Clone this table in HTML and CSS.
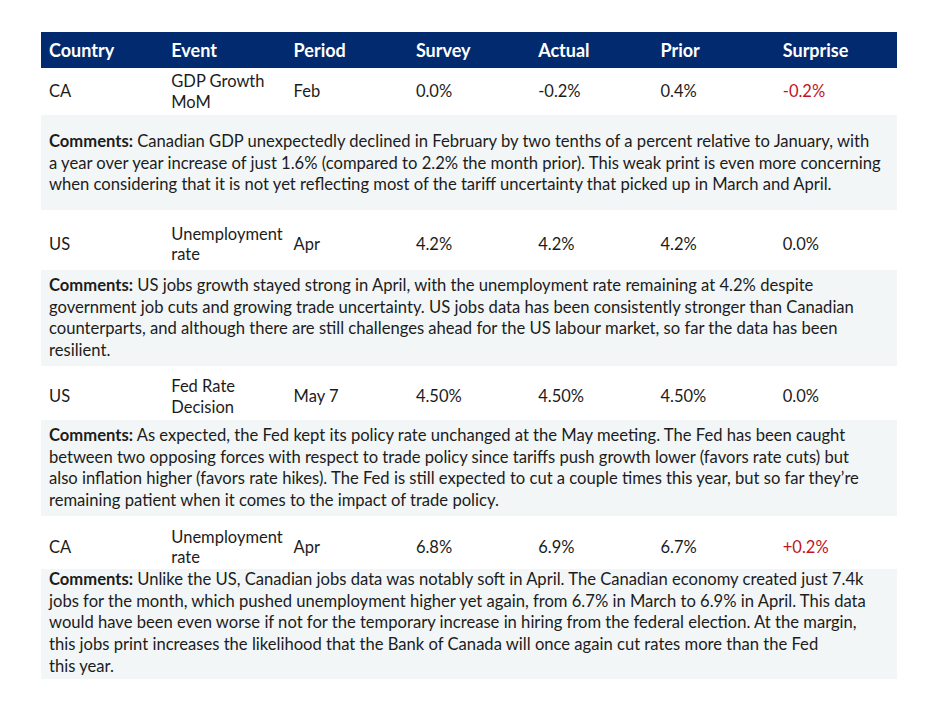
FILE: index.html
```html
<!DOCTYPE html>
<html lang="en">
<head>
<meta charset="utf-8">
<link rel="stylesheet" href="styles.css">
<title>Economic calendar</title>
</head>
<body>
<table class="cal">
  <colgroup>
    <col class="c"><col class="c"><col class="c"><col class="c"><col class="c"><col class="c"><col class="c">
  </colgroup>
  <thead>
    <tr class="head">
      <th>Country</th><th>Event</th><th>Period</th><th>Survey</th><th>Actual</th><th>Prior</th><th>Surprise</th>
    </tr>
  </thead>
  <tbody>
    <tr class="data r1">
      <td>CA</td><td class="ev">GDP Growth<br>MoM</td><td>Feb</td><td>0.0%</td><td>-0.2%</td><td>0.4%</td><td class="neg">-0.2%</td>
    </tr>
    <tr class="note n1">
      <td colspan="7"><b>Comments:</b> Canadian GDP unexpectedly declined in February by two tenths of a percent relative to January, with<br>a year over year increase of just 1.6% (compared to 2.2% the month prior). This weak print is even more concerning<br>when considering that it is not yet reflecting most of the tariff uncertainty that picked up in March and April.</td>
    </tr>
    <tr class="data r2">
      <td>US</td><td class="ev">Unemployment<br>rate</td><td>Apr</td><td>4.2%</td><td>4.2%</td><td>4.2%</td><td>0.0%</td>
    </tr>
    <tr class="note n2">
      <td colspan="7"><b>Comments:</b> US jobs growth stayed strong in April, with the unemployment rate remaining at 4.2% despite<br>government job cuts and growing trade uncertainty. US jobs data has been consistently stronger than Canadian<br>counterparts, and although there are still challenges ahead for the US labour market, so far the data has been<br>resilient.</td>
    </tr>
    <tr class="data r3">
      <td>US</td><td class="ev">Fed Rate<br>Decision</td><td>May 7</td><td>4.50%</td><td>4.50%</td><td>4.50%</td><td>0.0%</td>
    </tr>
    <tr class="note n3">
      <td colspan="7"><b>Comments:</b> As expected, the Fed kept its policy rate unchanged at the May meeting. The Fed has been caught<br>between two opposing forces with respect to trade policy since tariffs push growth lower (favors rate cuts) but<br>also inflation higher (favors rate hikes). The Fed is still expected to cut a couple times this year, but so far they’re<br>remaining patient when it comes to the impact of trade policy.</td>
    </tr>
    <tr class="data r4">
      <td>CA</td><td class="ev">Unemployment<br>rate</td><td>Apr</td><td>6.8%</td><td>6.9%</td><td>6.7%</td><td class="neg">+0.2%</td>
    </tr>
    <tr class="note n4">
      <td colspan="7"><b>Comments:</b> Unlike the US, Canadian jobs data was notably soft in April. The Canadian economy created just 7.4k<br>jobs for the month, which pushed unemployment higher yet again, from 6.7% in March to 6.9% in April. This data<br>would have been even worse if not for the temporary increase in hiring from the federal election. At the margin,<br>this jobs print increases the likelihood that the Bank of Canada will once again cut rates more than the Fed<br>this year.</td>
    </tr>
  </tbody>
</table>
</body>
</html>
```

FILE: styles.css
```css
html, body {
  margin: 0;
  padding: 0;
  background: #ffffff;
}
body {
  padding: 32px 0 0 41px;
  font-family: "Lato", "Open Sans", sans-serif;
  color: #1c1c1c;
}
.cal {
  border-collapse: collapse;
  table-layout: fixed;
  width: 856px;
}
.c { width: 122.3px; }
.cal th, .cal td {
  box-sizing: border-box;
}
.head th {
  background: #022a6e;
  color: #ffffff;
  font-weight: 700;
  font-size: 18px;
  text-align: left;
  height: 36px;
  padding: 0 8px;
  line-height: 20px;
}
.data td {
  font-size: 16.5px;
  line-height: 20.5px;
  padding: 0 8px;
  vertical-align: middle;
  white-space: nowrap;
}
.r1 td { height: 47px; }
.r2 td { height: 60px; padding-top: 8px; }
.r3 td { height: 54px; padding-top: 7px; }
.r4 td { height: 53px; padding-top: 9px; }
.neg { color: #c0141e; }
.note td {
  background: #f2f6f7;
  font-size: 16.6px;
  line-height: 21.7px;
  padding: 0 8px;
  white-space: nowrap;
  vertical-align: top;
}
.note b { font-weight: 700; }
.n1 td { height: 95px; padding-top: 16px; }
.n2 td { height: 96px; padding-top: 5px; }
.n3 td { height: 96px; padding-top: 5px; }
.n4 td { height: 110px; padding-top: 0; }
```
